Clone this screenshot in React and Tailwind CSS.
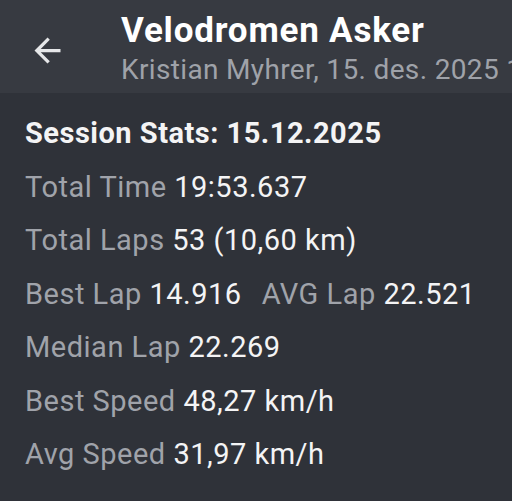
const rows = [
  [['Total Time', '19:53.637']],
  [['Total Laps', '53 (10,60 km)']],
  [['Best Lap', '14.916'], ['AVG Lap', '22.521']],
  [['Median Lap', '22.269']],
  [['Best Speed', '48,27 km/h']],
  [['Avg Speed', '31,97 km/h']],
]

const BackArrow = () => (
  <svg width="39" height="39" viewBox="0 0 24 24" className="text-[#e6e7e9]">
    <path fill="currentColor" d="M20 11H7.83l5.59-5.59L12 4l-8 8 8 8 1.41-1.41L7.83 13H20v-2z" />
  </svg>
)

const App = () => {
  return (
    <div className="w-[512px] h-[501px] overflow-hidden bg-[#2f3239]" style={{ fontFamily: 'Roboto, "Noto Sans", sans-serif' }}>
      <div className="h-[93px] bg-[#373a41] flex">
        <div className="w-[121px] shrink-0 flex items-center pl-[28px] pt-[7px]">
          <BackArrow />
        </div>
        <div className="flex flex-col whitespace-nowrap pt-[11px] min-w-0">
          <span className="text-[35px] leading-[40px] font-bold tracking-[0.8px] text-white">Velodromen Asker</span>
          <span className="mt-[3px] text-[28px] leading-[32px] tracking-[0.35px] text-[#9fa2a9]">Kristian Myhrer, 15. des. 2025 18:12</span>
        </div>
      </div>
      <div className="px-[25px] pt-[14px] tracking-[0.5px]">
        <div className="text-[29px] leading-[53.5px] font-bold text-[#f4f4f5]">Session Stats: 15.12.2025</div>
        <div className="flex flex-col">
          {rows.map((row, i) => (
            <div key={i} className="flex gap-[20px] text-[29px] leading-[53.5px] whitespace-nowrap">
              {row.map(([label, value]) => (
                <span key={label}>
                  <span className="text-[#a0a3aa]">{label}</span>{' '}
                  <span className="text-[#f4f4f5]">{value}</span>
                </span>
              ))}
            </div>
          ))}
        </div>
      </div>
    </div>
  )
}

export default App
